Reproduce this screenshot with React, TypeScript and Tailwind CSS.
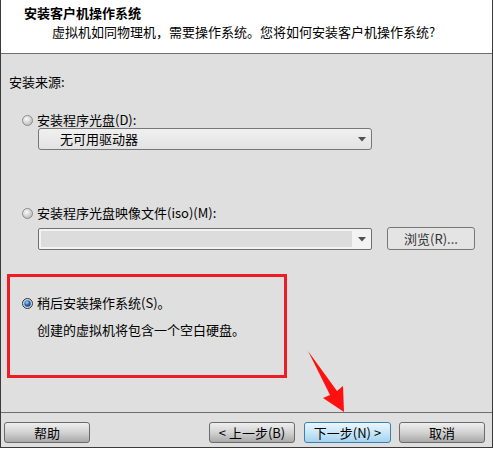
import React from 'react';

const Radio = ({ checked = false }: { checked?: boolean }) => (
    <svg width="11" height="11" viewBox="0 0 11 11" className="shrink-0">
        <defs>
            <radialGradient id="rOff" cx="40%" cy="35%" r="70%">
                <stop offset="0%" stopColor="#fafafa" />
                <stop offset="100%" stopColor="#b8b8b8" />
            </radialGradient>
            <radialGradient id="rOn" cx="40%" cy="35%" r="70%">
                <stop offset="0%" stopColor="#9fd6ff" />
                <stop offset="55%" stopColor="#1f6fc0" />
                <stop offset="100%" stopColor="#0b2f5c" />
            </radialGradient>
        </defs>
        {checked ? (
            <>
                <circle cx="5.5" cy="5.5" r="5" fill="#d8d8d8" stroke="#2e3338" strokeWidth="1" />
                <circle cx="5.5" cy="5.5" r="3.2" fill="url(#rOn)" />
            </>
        ) : (
            <circle cx="5.5" cy="5.5" r="5" fill="url(#rOff)" stroke="#8c8c8c" strokeWidth="1" />
        )}
    </svg>
);

const Caret = () => (
    <svg width="8" height="5" viewBox="0 0 8 5" className="shrink-0">
        <path d="M0 0 L8 0 L4 4.5 Z" fill="#505050" />
    </svg>
);

const Btn = ({ label, primary = false, w = 'w-[86px]' }: { label: string; primary?: boolean; w?: string }) => (
    <button
        className={
            primary
                ? `${w} h-[21px] rounded-[3px] border border-[#3c7fb1] bg-gradient-to-b from-[#eaf6fd] via-[#c9e7f8] to-[#a3d3ef] text-[13px] leading-[19px] text-black`
                : `${w} h-[21px] rounded-[3px] border border-[#6b6b6b] bg-gradient-to-b from-[#efefef] via-[#d2d2d2] to-[#a9a9a9] text-[13px] leading-[19px] text-black`
        }
    >
        {label}
    </button>
);

export default function App() {
    return (
        <div className="w-[494px] h-[449px] bg-white font-['Noto_Sans_CJK_SC',sans-serif] text-[13px] text-black">
            <div className="relative w-[493px] h-[448px] border-x border-b border-[#3a3a3a] flex flex-col">
                {/* header */}
                <div className="h-[54px] shrink-0 bg-white border-b border-[#6e6e6e] pl-[23px] pt-[5px]">
                    <div className="font-bold leading-[16px]">安装客户机操作系统</div>
                    <div className="ml-[28px] mt-[3px] leading-[16px]">
                        虚拟机如同物理机，需要操作系统。您将如何安装客户机操作系统?
                    </div>
                </div>

                {/* body */}
                <div className="flex-1 bg-[#dfdfdf] flex flex-col">
                    <div className="mt-[20px] ml-[8px] leading-[16px]">安装来源:</div>

                    <div className="mt-[22px] ml-[21px] h-[16px] flex items-center gap-[4px] leading-[16px]">
                        <Radio />
                        <span>安装程序光盘(D):</span>
                    </div>
                    <div className="ml-[37px] w-[334px] h-[22px] rounded-[3px] border border-[#777] bg-gradient-to-b from-[#f0f0f0] to-[#e3e3e3] flex items-center pl-[21px] pr-[5px]">
                        <span className="flex-1 leading-[16px]">无可用驱动器</span>
                        <Caret />
                    </div>

                    <div className="mt-[55px] ml-[21px] h-[16px] flex items-center gap-[4px] leading-[16px]">
                        <Radio />
                        <span>安装程序光盘映像文件(iso)(M):</span>
                    </div>
                    <div className="mt-[6px] ml-[37px] flex items-start">
                        <div className="mt-[1px] w-[334px] h-[22px] rounded-[2px] border border-[#707070] bg-[#f3f3f3] flex items-start pt-[2px] pl-[2px] pr-[5px]">
                            <div className="w-[311px] h-[16px] bg-[#dcdcdc]" />
                            <div className="flex-1 h-[16px] flex items-center justify-end">
                                <Caret />
                            </div>
                        </div>
                        <button className="ml-[15px] w-[88px] h-[23px] rounded-[3px] border border-[#777] bg-[#e4e4e4] text-[13px] leading-[21px] text-[#333]">
                            浏览(R)...
                        </button>
                    </div>

                    <div className="mt-[24px] ml-[6px] w-[280px] h-[104px] border-[3px] border-[#ee1c24] pt-[18px] pl-[12px]">
                        <div className="h-[16px] flex items-center gap-[4px] leading-[16px]">
                            <Radio checked />
                            <span>稍后安装操作系统(S)。</span>
                        </div>
                        <div className="mt-[11px] ml-[15px] leading-[16px]">创建的虚拟机将包含一个空白硬盘。</div>
                    </div>
                </div>

                {/* footer */}
                <div className="h-[35px] shrink-0 bg-[#dfdfdf] border-t border-[#6e6e6e] flex items-start pt-[9px] pl-[3px] pr-[7px]">
                    <Btn label="帮助" />
                    <div className="flex-1" />
                    <div className="flex gap-[9px]">
                        <Btn label="< 上一步(B)" />
                        <Btn label="下一步(N) >" primary w="w-[87px]" />
                    </div>
                    <div className="ml-[8px]">
                        <Btn label="取消" />
                    </div>
                </div>

                {/* annotation arrow */}
                <svg className="absolute left-[300px] top-[345px] pointer-events-none" width="50" height="70" viewBox="300 345 50 70">
                    <path d="M307 351 L336 391 L342 386 L343 412 L322 398 L329 395 Z" fill="#ff1010" />
                </svg>
            </div>
        </div>
    );
}
